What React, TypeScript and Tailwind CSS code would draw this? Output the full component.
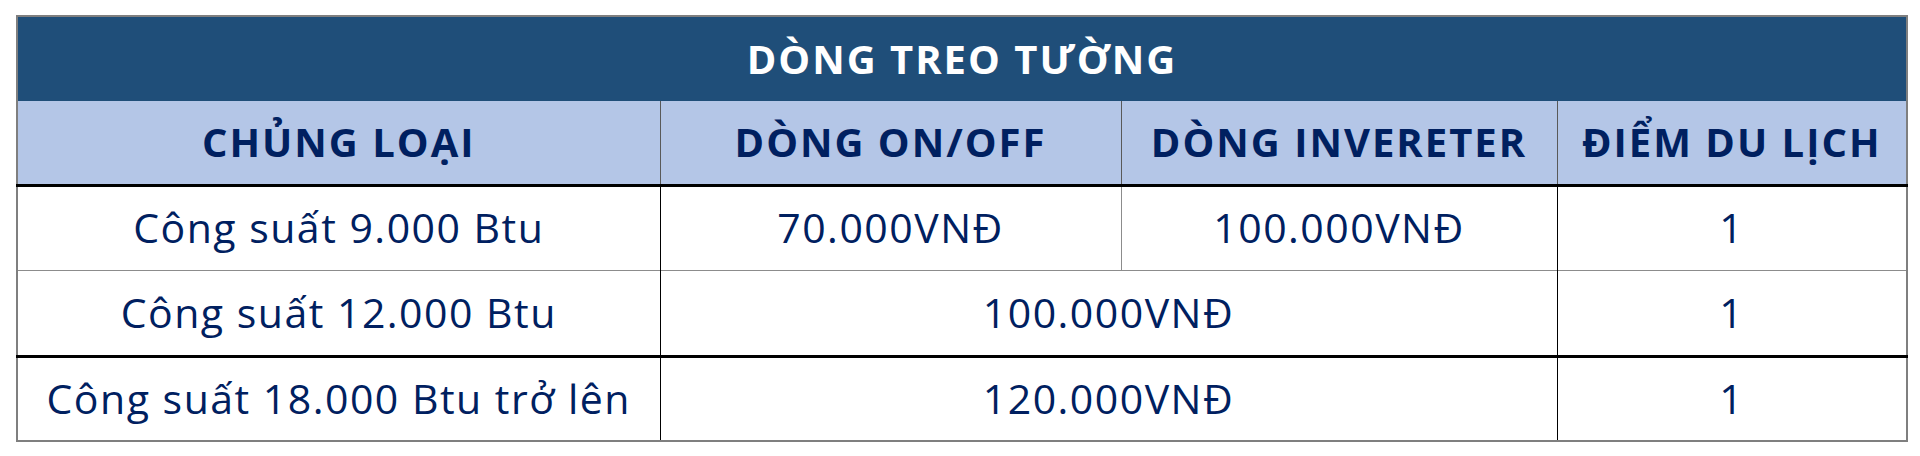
const rows = [
  { label: "Công suất 9.000 Btu", onOff: "70.000VNĐ", inverter: "100.000VNĐ", points: "1" },
  { label: "Công suất 12.000 Btu", price: "100.000VNĐ", points: "1" },
  { label: "Công suất 18.000 Btu trở lên", price: "120.000VNĐ", points: "1" },
];

export default function App() {
  return (
    <div className="w-[1920px] h-[456px] bg-white pt-[15px] pl-[16px] font-['Open_Sans',sans-serif] text-[#002060]">
      <table className="table-fixed border-collapse w-[1890px] border-2 border-[#7f7f7f]">
        <colgroup>
          <col className="w-[643px]" />
          <col className="w-[461px]" />
          <col className="w-[436px]" />
          <col className="w-[350px]" />
        </colgroup>
        <thead>
          <tr className="h-[85px] bg-[#1f4e79]">
            <th colSpan={4} className="text-white text-[40px] font-bold tracking-[2px] text-center">
              DÒNG TREO TƯỜNG
            </th>
          </tr>
          <tr className="h-[84px] bg-[#b4c6e7] border-b-[3px] border-black text-[40px] font-bold tracking-[2px]">
            <th className="border-r border-[#595959]">CHỦNG LOẠI</th>
            <th className="border-r border-[#595959]">DÒNG ON/OFF</th>
            <th className="border-r border-[#595959]">DÒNG INVERETER</th>
            <th>ĐIỂM DU LỊCH</th>
          </tr>
        </thead>
        <tbody className="text-[41px] tracking-[1.5px] text-center">
          <tr className="h-[85px] border-b border-[#8c8c8c]">
            <td className="border-r border-black">{rows[0].label}</td>
            <td className="border-r border-[#8c8c8c]">{rows[0].onOff}</td>
            <td className="border-r border-black">{rows[0].inverter}</td>
            <td>{rows[0].points}</td>
          </tr>
          <tr className="h-[86px] border-b-[3px] border-black">
            <td className="border-r border-black">{rows[1].label}</td>
            <td colSpan={2} className="border-r border-black">{rows[1].price}</td>
            <td>{rows[1].points}</td>
          </tr>
          <tr className="h-[85px]">
            <td className="border-r border-black">{rows[2].label}</td>
            <td colSpan={2} className="border-r border-black">{rows[2].price}</td>
            <td>{rows[2].points}</td>
          </tr>
        </tbody>
      </table>
    </div>
  );
}
